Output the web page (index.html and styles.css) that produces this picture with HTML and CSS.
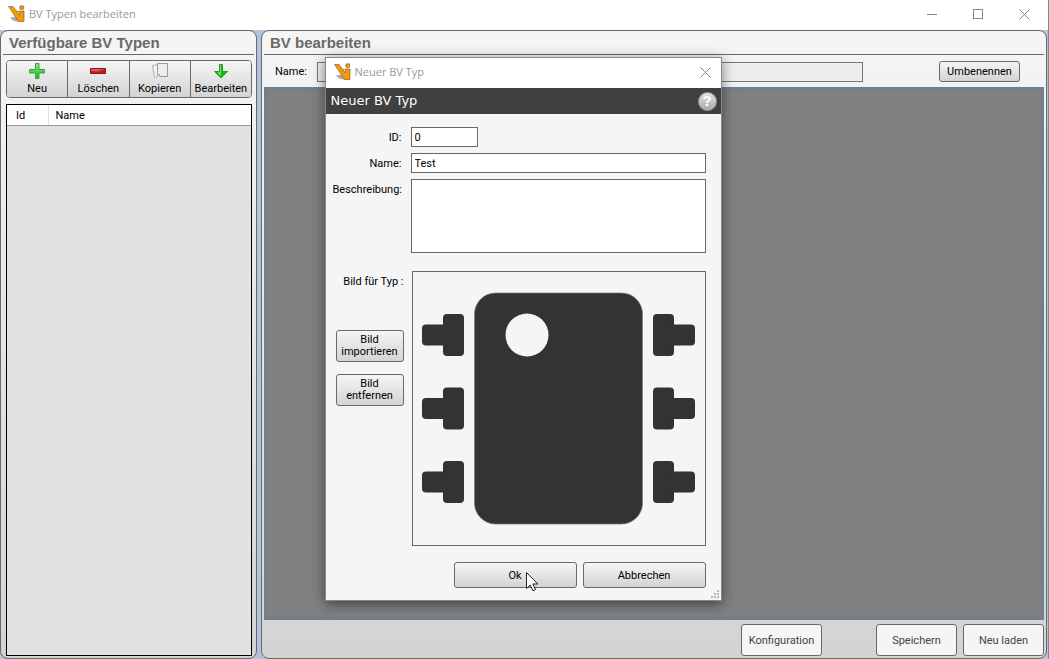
FILE: index.html
```html
<!DOCTYPE html>
<html lang="de">
<head>
<meta charset="UTF-8">
<meta name="viewport" content="width=device-width, initial-scale=1">
<title>BV Typen bearbeiten</title>
<link rel="stylesheet" href="styles.css">
</head>
<body>

<svg class="defs" aria-hidden="true">
<symbol id="logo" viewBox="0 0 18 18">
<path d="M2 12.500l6-1 3 5c-4 .3-7.500-1.500-9-4z" fill="#aaa"/>
<path d="M.5 1.500h4.500l6.500 8.500V6h4.500v10.500h-5.500z" fill="#f5980a" stroke="#7a5520" stroke-width=".6"/>
<path d="M8.500 6.300h3" stroke="#8a6b3a" stroke-width=".8"/>
<rect x="11.800" y=".8" width="4" height="3.600" rx="1.200" fill="#f5980a" stroke="#7a5520" stroke-width=".6"/>
</symbol>
<symbol id="close" viewBox="0 0 11 11">
<path d="M.5.5l10 10M10.500.5l-10 10" fill="none" stroke="#888"/>
</symbol>
</svg>

<div class="window">
<header class="titlebar">
<svg class="logo"><use href="#logo"/></svg>
<span class="caption">BV Typen bearbeiten</span>
<button class="win-btn" aria-label="Minimieren"><svg width="11" height="11"><path d="M0 5.500h10" stroke="#888"/></svg></button>
<button class="win-btn" aria-label="Maximieren"><svg width="11" height="11"><rect x=".5" y=".5" width="9" height="9" fill="none" stroke="#888"/></svg></button>
<button class="win-btn" aria-label="Schließen"><svg width="11" height="11"><use href="#close"/></svg></button>
</header>

<div class="workspace">
<!-- Liste der Typen -->
<section class="panel types">
<h2>Verfügbare BV Typen</h2>
<div class="tools">
<button><svg width="16" height="16" viewBox="0 0 16 16"><defs><linearGradient id="green" x2="0" y2="1"><stop offset="0" stop-color="#8fe87f"/><stop offset="1" stop-color="#18b51c"/></linearGradient></defs><path d="M6.500.5h3.500v6h5.500V10H10v5.500H6.500V10H.5V6.500h6z" fill="url(#green)" stroke="#3aa33c"/></svg>Neu</button>
<button><svg width="16" height="16" viewBox="0 0 16 16"><path d="M.5 5.500h15v5H.5z" fill="#b82020" stroke="#8c1717"/><path d="M1 6h14L8 8.500 1 8z" fill="#dc5a52"/></svg>Löschen</button>
<button><svg width="16" height="16" viewBox="0 0 16 16"><path d="M.5 2.500l5-1v12l-2 1.500-1-1z" fill="#f3f3f3" stroke="#aaa"/><path d="M5.500.5h10v13h-8l-2-2z" fill="#eee" stroke="#999"/><path d="M5.500 11.500h2v2" fill="#fff" stroke="#aaa"/></svg>Kopieren</button>
<button><svg width="16" height="16" viewBox="0 0 16 16"><path d="M6.500 1.500h3v7h5L8 15 1.500 8.500h5z" fill="#14b814" stroke="#2a9a2e"/><path d="M7 2h1v11L4 9.200h3z" fill="#6be35f"/></svg>Bearbeiten</button>
</div>
<div class="list">
<table>
<thead><tr><th class="col-id">Id</th><th>Name</th></tr></thead>
</table>
</div>
</section>

<!-- Editor -->
<section class="panel editor">
<h2>BV bearbeiten</h2>
<div class="name-row">
<label for="bvName">Name:</label>
<input id="bvName" type="text" readonly>
<button class="btn">Umbenennen</button>
</div>
<div class="canvas"></div>
<div class="actions">
<button class="btn flat config">Konfiguration</button>
<button class="btn flat">Speichern</button>
<button class="btn flat">Neu laden</button>
</div>
</section>
</div>
</div>

<!-- Dialog -->
<div class="dialog" role="dialog" aria-labelledby="dlgTitle">
<div class="dialog-title">
<svg class="logo"><use href="#logo"/></svg>
<span class="caption">Neuer BV Typ</span>
<button class="win-btn" aria-label="Schließen"><svg width="11" height="11"><use href="#close"/></svg></button>
</div>
<div class="dialog-head">
<h1 id="dlgTitle">Neuer BV Typ</h1>
<button class="help" aria-label="Hilfe">?</button>
</div>
<form class="form" onsubmit="return false">
<label for="typeId">ID:</label>
<input id="typeId" class="short" type="text" value="0">
<label for="typeName">Name:</label>
<input id="typeName" type="text" value="Test">
<label for="typeDesc">Beschreibung:</label>
<textarea id="typeDesc"></textarea>
<div class="image-tools">
<span class="image-label">Bild für Typ :</span>
<button class="btn" type="button">Bild importieren</button>
<button class="btn" type="button">Bild entfernen</button>
</div>
<div class="preview">
<svg viewBox="0 0 292 273" role="img" aria-label="Bild für Typ">
<defs>
<g id="pin"><rect x="21" width="21" height="42" rx="4"/><rect y="10.500" width="26" height="21" rx="4"/></g>
<g id="pins"><use href="#pin" x="9" y="42"/><use href="#pin" x="9" y="115.500"/><use href="#pin" x="9" y="189"/></g>
</defs>
<g fill="#333" stroke="#777" stroke-width=".7">
<rect x="61.500" y="21" width="168" height="231" rx="21"/>
</g>
<g fill="#333">
<use href="#pins"/>
<use href="#pins" transform="matrix(-1 0 0 1 291 0)"/>
</g>
<circle cx="114" cy="63" r="21.500" fill="#f5f5f5"/>
</svg>
</div>
<div class="form-buttons">
<button class="btn" type="submit">Ok</button>
<button class="btn" type="button">Abbrechen</button>
</div>
</form>
<svg class="grip" width="8" height="8" fill="#bbb"><path d="M6 0h2v2H6zM6 3h2v2H6zM3 3h2v2H3zM6 6h2v2H6zM3 6h2v2H3zM0 6h2v2H0z"/></svg>
<svg class="cursor" width="13" height="20" viewBox="0 0 13 20"><path d="M.5.5v16l3.700-3.500 2.800 5.800 2.500-1.200L6.900 12h5z" fill="#fff" stroke="#222"/></svg>
</div>

</body>
</html>
```
FILE: styles.css
```css
*{margin:0;padding:0;box-sizing:border-box;}
body{font-family:Roboto,"Liberation Sans",sans-serif;font-size:11px;line-height:12px;color:#000;background:#b0c4de;overflow:hidden;}
button,input,textarea{font:inherit;color:inherit;}
.defs{position:absolute;width:0;height:0;}

/* Window */
.window{display:flex;flex-direction:column;height:100vh;border-right:1px solid #888;}
.titlebar,.dialog-title{display:flex;align-items:center;height:30px;background:#fff;padding:0 1px 2px 8px;}
.logo{width:18px;height:18px;margin-right:3px;}
.caption{flex:1;font-family:"Open Sans","Noto Sans",sans-serif;font-size:11px;line-height:16px;color:#999;}
.win-btn{width:46px;height:28px;border:none;background:none;display:flex;align-items:center;justify-content:center;}
.workspace{flex:1;display:flex;gap:4px;min-height:0;padding-right:1px;}

/* Panels */
.panel{
display:flex;flex-direction:column;border:1px solid #696969;border-radius:8px;
background:linear-gradient(#f5f5f5,#d3d3d3);
}
.panel h2{
font-family:"Liberation Sans",sans-serif;font-size:15px;line-height:23px;color:#696969;
border-bottom:1px solid #696969;padding-left:6px;margin:0 2px;
}
.types{width:257px;padding-bottom:2px;}
.editor{flex:1;padding-bottom:2px;}

/* Toolbar */
.tools{display:flex;margin:5px 4px 6px 5px;border:1px solid #696969;border-radius:4px;overflow:hidden;}
.tools button{
flex:1;height:36px;border:none;border-right:1px solid #696969;background:linear-gradient(#f5f5f5,#d3d3d3);
display:flex;flex-direction:column;align-items:center;gap:4px;padding-top:2px;
}
.tools button:last-child{border-right:none;}
.list{flex:1;margin:0 4px 0 5px;background:#e2e2e2;border:1px solid #000;}
table{width:100%;border-collapse:collapse;background:#fff;}
th{height:20px;text-align:left;font-weight:normal;padding:2px 0 0 7px;border-bottom:1px solid #999;}
.col-id{width:41px;padding-left:9px;border-right:1px solid #ddd;}

/* Editor */
.name-row{display:flex;align-items:center;padding:6px 26px 5px 13px;}
.name-row input{flex:1;min-width:0;height:20px;margin:0 76px 0 10px;border:1px solid #777;background:#eee;}
.btn{
border:1px solid #696969;border-radius:3px;background:linear-gradient(#f5f5f5,#d3d3d3);
padding:1px 4px 0;
}
.name-row .btn{width:81px;height:21px;}
.canvas{flex:1;margin:0 2px;background:#808080;border:3px solid #708090;}
.actions{display:flex;justify-content:flex-end;gap:6px;padding:4px 2px 0;}
.flat{width:81px;height:32px;background:#f5f5f5;color:#444;}
.config{margin-right:48px;}

/* Dialog */
.dialog{
position:absolute;left:calc(50% - 200px);top:57px;width:397px;
background:#f5f5f5;border:1px solid #888;box-shadow:0 3px 12px rgba(0,0,0,.5);
}
.dialog-title .win-btn{width:28px;}
.dialog-head{display:flex;align-items:center;height:26px;background:#404040;color:#fff;padding:0 4px 0 5px;}
.dialog-head h1{flex:1;font-family:"DejaVu Sans",sans-serif;font-size:13px;font-weight:normal;line-height:16px;}
.help{
width:19px;height:19px;border:1px solid #999;border-radius:50%;background:linear-gradient(#e2e2e2,#aaa);
color:#fff;font:bold 15px/16px "Liberation Sans",sans-serif;
}
.form{display:grid;grid-template-columns:71px 1fr;column-gap:7px;row-gap:6px;padding:13px 15px 12px 7px;}
.form label{text-align:right;padding:5px 2px 0 0;white-space:nowrap;}
.form input,.form textarea{width:100%;height:20px;padding:0 3px;border:1px solid #696969;background:#fff;}
.form .short{width:67px;}
.form textarea{height:74px;resize:none;display:block;}
.image-tools{display:flex;flex-direction:column;gap:12px;padding:12px 0 0 3px;}
.image-label{text-align:right;white-space:nowrap;padding:5px 0 30px;}
.image-tools .btn{height:32px;padding-top:0;}
.preview{margin:12px 0 0 1px;border:1px solid #696969;}
.preview svg{display:block;width:100%;}
.form-buttons{grid-column:1 / -1;display:flex;justify-content:flex-end;gap:6px;padding-top:10px;}
.form-buttons .btn{width:123px;height:26px;}
.grip{position:absolute;right:2px;bottom:2px;}
.cursor{position:absolute;left:200px;top:514px;}
```
